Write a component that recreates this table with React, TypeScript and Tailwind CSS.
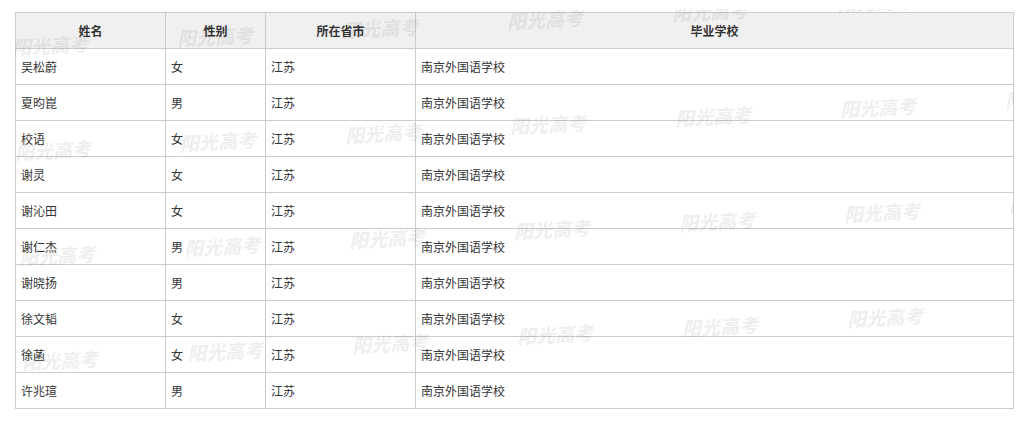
import React from "react";

const rows: [string, string][] = [
  ["吴松蔚", "女"],
  ["夏昀崑", "男"],
  ["校语", "女"],
  ["谢灵", "女"],
  ["谢沁田", "女"],
  ["谢仁杰", "男"],
  ["谢晓扬", "男"],
  ["徐文韬", "女"],
  ["徐菡", "女"],
  ["许兆瑄", "男"],
];

const marks: { x: number; y: number }[] = [];
for (let c = 0; c < 7; c++) {
  for (let r = 0; r < 4; r++) {
    const x = 12 + 165 * c + 3.3 * r;
    const yc = 45 - 8.6 * c + 105 * r;
    marks.push({ x: x - 15, y: yc - 12 - 12 });
  }
}

const cellBase =
  "border-r border-b border-[#cccccc] h-[36px] flex items-center text-[12px] text-[#333333]";

export default function App() {
  return (
    <div
      className="bg-white w-[1030px] h-[425px] pt-[12px] pl-[15px]"
      style={{ fontFamily: '"Noto Sans CJK SC", "Noto Sans", sans-serif' }}
    >
      <div className="relative w-[999px]">
        <div className="grid grid-cols-[150px_100px_150px_598px] border-l border-t border-[#cccccc]">
          {["姓名", "性别", "所在省市", "毕业学校"].map((h) => (
            <div
              key={h}
              className={`${cellBase} justify-center bg-[#f0f0f0] font-bold`}
            >
              {h}
            </div>
          ))}
          {rows.map(([name, sex]) => (
            <React.Fragment key={name}>
              <div className={`${cellBase} pl-[5px]`}>{name}</div>
              <div className={`${cellBase} pl-[5px]`}>{sex}</div>
              <div className={`${cellBase} pl-[5px]`}>江苏</div>
              <div className={`${cellBase} pl-[5px]`}>南京外国语学校</div>
            </React.Fragment>
          ))}
        </div>
        <div className="pointer-events-none absolute left-0 top-[-3px] right-0 bottom-0 overflow-hidden">
          {marks.map((m, i) => (
            <span
              key={i}
              className="absolute whitespace-nowrap text-[19px] leading-[24px] font-black italic text-black/[0.08] -rotate-3"
              style={{ left: m.x, top: m.y + 3 }}
            >
              阳光高考
            </span>
          ))}
        </div>
      </div>
    </div>
  );
}
